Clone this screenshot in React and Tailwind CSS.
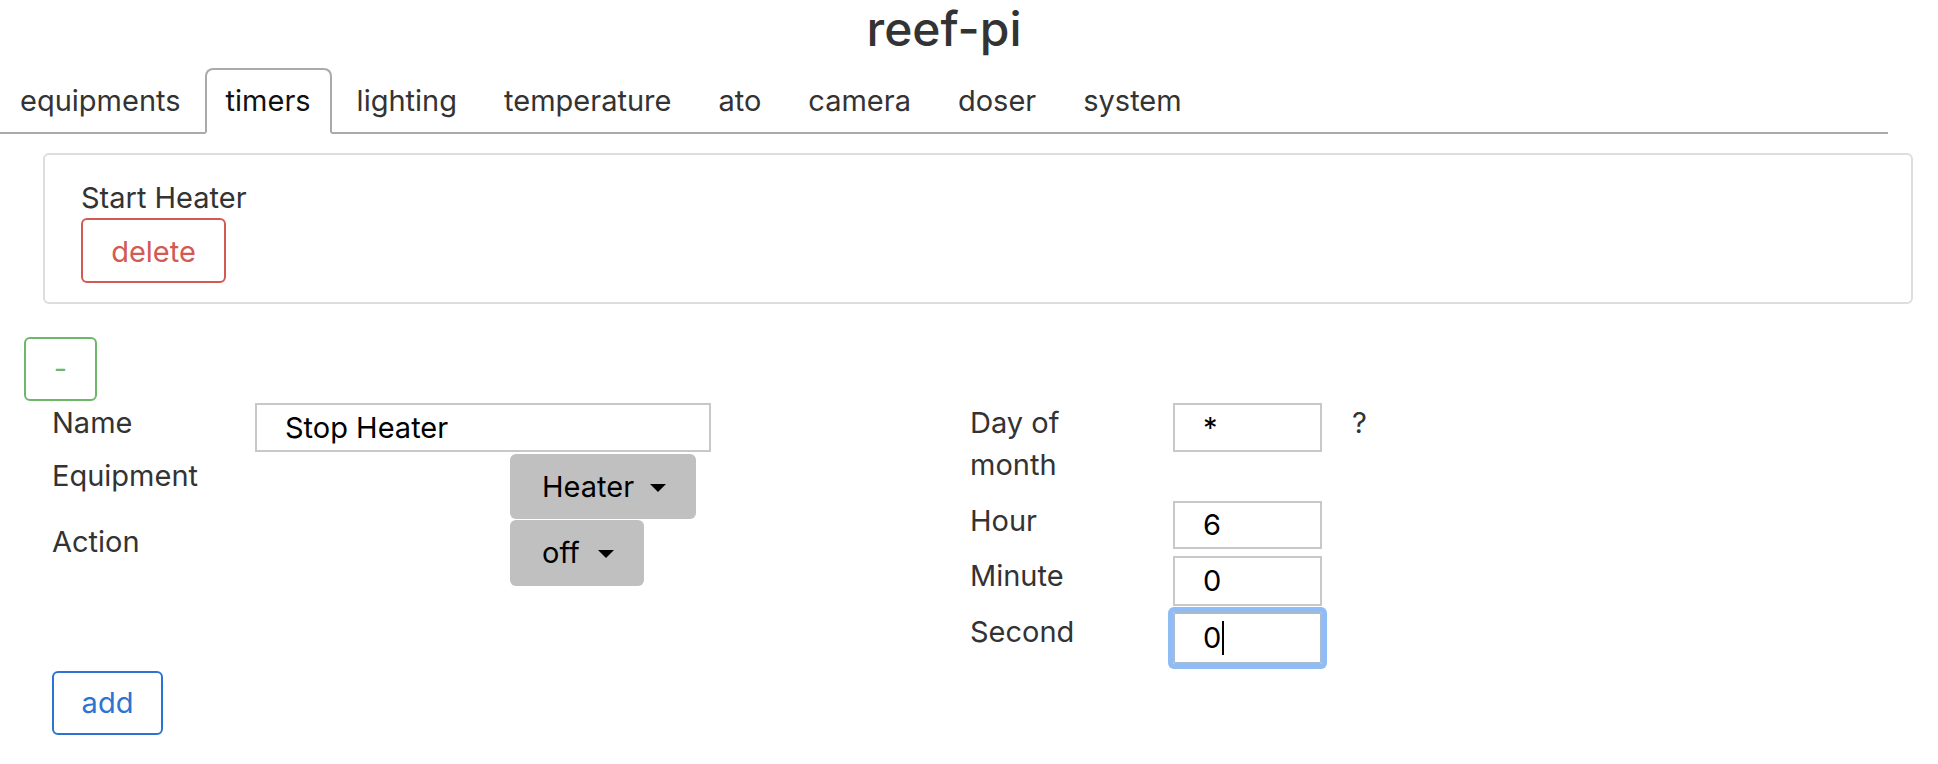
export default function App() {
  const tabs = ["equipments", "timers", "lighting", "temperature", "ato", "camera", "doser", "system"];

  return (
    <div className="min-h-[764px] bg-white font-['Inter','Noto_Sans',sans-serif] text-[29px] leading-[40px] text-[#333]">
      <div className="w-[1888px]">
        <h1 className="text-center text-[48px] leading-[58px] font-medium text-[#333]">reef-pi</h1>
        <ul className="mt-[10px] flex border-b-2 border-[#aaa] pl-0 text-[29px]">
          {tabs.map((t) => (
            <li
              key={t}
              className={
                t === "timers"
                  ? "-mb-[2px] mr-[3px] rounded-t-[8px] border-2 border-[#aaa] border-b-white bg-white px-[19px] pt-[11px] pb-[11px] text-[#111]"
                  : t === "equipments"
                    ? "-mb-[2px] mr-[3px] border-2 border-transparent pl-[18px] pr-[19px] pt-[11px] pb-[11px]"
                    : "-mb-[2px] mr-[3px] border-2 border-transparent px-[20px] pt-[11px] pb-[11px]"
              }
            >
              {t}
            </li>
          ))}
        </ul>
      </div>

      <div className="ml-[43px] mt-[19px] w-[1870px] rounded-[6px] border-2 border-[#ddd] px-[36px] pt-[23px] pb-[19px]">
        <div>Start Heater</div>
        <button className="w-[145px] rounded-[6px] border-2 border-[#d35a52] pt-[12px] pb-[9px] text-center text-[#d35a52]">
          delete
        </button>
      </div>

      <button className="ml-[24px] mt-[33px] h-[64px] w-[73px] rounded-[6px] border-2 border-[#6cb86a] text-center text-[#6cb86a]">
        -
      </button>

      <div className="mt-[2px] flex">
        <div className="ml-[52px] w-[918px]">
          <div className="flex">
            <div className="w-[203px]">Name</div>
            <div className="flex h-[49px] w-[456px] items-center border-2 border-[#c8c8c8] pl-[28px] text-black">Stop Heater</div>
          </div>
          <div className="mt-[2px] flex">
            <div className="mt-[2px] w-[458px]">Equipment</div>
            <div className="flex h-[65px] items-center rounded-[6px] bg-[#c0c0c0] pl-[32px] pr-[30px] text-black">
              Heater
              <span className="ml-[16px] mt-[2px] h-0 w-0 border-x-[8px] border-t-[8px] border-x-transparent border-t-black" />
            </div>
          </div>
          <div className="mt-[1px] flex">
            <div className="mt-[2px] w-[458px]">Action</div>
            <div className="flex h-[66px] items-center rounded-[6px] bg-[#c0c0c0] pl-[32px] pr-[30px] text-black">
              off
              <span className="ml-[18px] mt-[2px] h-0 w-0 border-x-[8px] border-t-[8px] border-x-transparent border-t-black" />
            </div>
          </div>
          <button className="mt-[85px] h-[64px] w-[111px] rounded-[6px] border-2 border-[#2c74d1] text-center text-[#2c74d1]">
            add
          </button>
        </div>

        <div className="w-[600px]">
          <div className="flex">
            <div className="-mt-[1px] w-[203px] pr-[50px] leading-[42px]">Day of month</div>
            <div className="flex h-[49px] w-[149px] items-center border-2 border-[#c8c8c8] pl-[28px] text-black">*</div>
            <div className="ml-[30px]">?</div>
          </div>
          <div className="mt-[15px] flex">
            <div className="w-[203px]">Hour</div>
            <div className="flex h-[48px] w-[149px] items-center border-2 border-[#c8c8c8] pl-[28px] text-black">6</div>
          </div>
          <div className="mt-[7px] flex">
            <div className="w-[203px]">Minute</div>
            <div className="flex h-[50px] w-[149px] items-center border-2 border-[#c8c8c8] pl-[28px] text-black">0</div>
          </div>
          <div className="mt-[6px] flex">
            <div className="w-[203px]">Second</div>
            <div className="flex h-[52px] w-[149px] items-center rounded-[2px] border-2 border-[#a9b9d0] pl-[28px] text-black ring-[5px] ring-[#8fbcf5]">
              0
              <span className="ml-[1px] h-[34px] w-[2px] bg-black" />
            </div>
          </div>
        </div>
      </div>
    </div>
  );
}
